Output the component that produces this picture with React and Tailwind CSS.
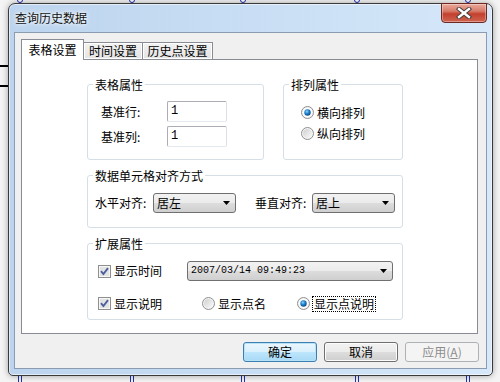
import React from "react";

const CJK = "font-['Noto_Sans_CJK_SC','Noto_Sans',sans-serif]";

function Radio({ checked }) {
  return (
    <svg width="13" height="13" viewBox="0 0 13 13" className="shrink-0">
      <defs>
        <linearGradient id="radOuter" x1="0" y1="0" x2="1" y2="1">
          <stop offset="0" stopColor="#cfcfcf" />
          <stop offset="1" stopColor="#fbfbfb" />
        </linearGradient>
        <radialGradient id="radDot" cx="0.4" cy="0.35" r="0.75">
          <stop offset="0" stopColor="#8fd6fb" />
          <stop offset="0.45" stopColor="#1c80cf" />
          <stop offset="1" stopColor="#0a3d70" />
        </radialGradient>
      </defs>
      <circle cx="6.5" cy="6.5" r="6" fill="#f4f4f4" stroke="#8e8f8f" />
      <circle cx="6.5" cy="6.5" r="4.5" fill={checked ? "#ffffff" : "url(#radOuter)"} />
      {checked && <circle cx="6.5" cy="6.5" r="3.2" fill="url(#radDot)" />}
    </svg>
  );
}

function Check() {
  return (
    <svg width="13" height="13" viewBox="0 0 13 13" className="shrink-0">
      <rect x="0.5" y="0.5" width="12" height="12" fill="#f6f6f6" stroke="#8e8f8f" />
      <rect x="2" y="2" width="9" height="9" fill="#e3e3e3" />
      <path d="M3 6.2 L5.4 9 L10 3.2" stroke="#4b5f9e" strokeWidth="1.9" fill="none" />
    </svg>
  );
}

function Arrow() {
  return (
    <svg width="7" height="4" viewBox="0 0 7 4" className="shrink-0">
      <polygon points="0,0 7,0 3.5,4" fill="#000" />
    </svg>
  );
}

function Group({ title, className, children }) {
  return (
    <div className={"relative border border-[#d5dfe5] rounded-[3px] bg-white " + className}>
      <span className="absolute left-[5px] top-[-8px] px-[2px] bg-white leading-[16px]">{title}</span>
      {children}
    </div>
  );
}

function Select({ text, className, mono }) {
  return (
    <div
      className={
        "flex items-center justify-between h-[20px] border border-[#707070] rounded-[3px] pl-[3px] pr-[5px] bg-[linear-gradient(#f2f2f2,#ebebeb_50%,#dddddd_50%,#cfcfcf)] " +
        className
      }
    >
      <span className={mono ? "font-['Liberation_Mono',monospace] text-[10px] leading-none" : "leading-none"}>{text}</span>
      <Arrow />
    </div>
  );
}

function TextBox({ value }) {
  return (
    <div className="w-[60px] h-[21px] border border-[#abadb3] border-r-[#dbdfe6] border-b-[#e3e9ef] rounded-[2px] bg-white pl-[3px] pt-[3px] font-['Liberation_Mono',monospace] text-[12px] leading-[12px]">
      {value}
    </div>
  );
}

export default function App() {
  const dots = [20, 132, 243, 357, 468];
  return (
    <div className={"relative w-[500px] h-[382px] overflow-hidden bg-[#f4f4f4] pt-[3px] pl-[8px] text-[12px] text-black " + CJK}>
      {/* desktop canvas decorations */}
      {dots.map((x) => (
        <div
          key={"d" + x}
          className="absolute top-[-3px] w-[6px] h-[6px] rounded-full border border-[#1f2fb8] bg-white"
          style={{ left: x - 3 }}
        />
      ))}
      {dots.map((x) => (
        <React.Fragment key={"b" + x}>
          <div className="absolute top-[375px] w-[1px] h-[7px] bg-[#1f2fb8]" style={{ left: x - 2 }} />
          <div className="absolute top-[375px] w-[1px] h-[7px] bg-[#1f2fb8]" style={{ left: x + 1 }} />
        </React.Fragment>
      ))}
      <div className="absolute left-0 top-[65px] w-[8px] h-[2px] bg-black" />
      <div className="absolute left-0 top-[85px] w-[8px] h-[2px] bg-black" />

      {/* window */}
      <div className="relative w-[485px] h-[373px] flex flex-col rounded-t-[7px] rounded-b-[5px] border border-[#3a3a3a] bg-[linear-gradient(90deg,#bcd4ee,#cbe0f5_60%,#d6e8fa)] shadow-[inset_0_0_0_1px_rgba(255,255,255,0.55),0_0_6px_rgba(0,0,0,0.35)]">
        {/* title bar */}
        <div className="relative h-[28px] shrink-0 flex items-center pl-[6px]">
          <span className="text-[12px] leading-none text-[#111] [text-shadow:0_0_6px_#fff,0_0_3px_#fff]">查询历史数据</span>
          <div className="absolute top-[-1px] right-[5px] w-[46px] h-[20px] flex items-center justify-center rounded-b-[4px] border border-[#6e2820] bg-[linear-gradient(#e8aa9b,#d77a68_40%,#c2402d_55%,#cf6450)] shadow-[inset_0_0_0_1px_rgba(255,255,255,0.35)]">
            <svg width="16" height="12" viewBox="0 0 16 12">
              <path d="M3 2 L13 10 M13 2 L3 10" stroke="#3b3b3b" strokeWidth="4.2" strokeLinecap="square" />
              <path d="M3 2 L13 10 M13 2 L3 10" stroke="#ffffff" strokeWidth="2.4" strokeLinecap="square" />
            </svg>
          </div>
        </div>

        {/* client area */}
        <div className="mx-[5px] mb-[6px] flex-1 flex flex-col border border-[#8b9bb0] bg-[#f0f0f0] pt-[6px] pl-[6px] pr-[7px]">
          {/* tabs */}
          <div className="relative z-10 flex items-end h-[20px]">
            <div className="w-[63px] h-[21px] -mb-[1px] flex items-center justify-center border border-b-0 border-[#898c95] bg-white leading-none">
              表格设置
            </div>
            <div className="w-[59px] h-[17px] flex items-center justify-center border border-b-0 border-l-0 border-[#898c95] bg-[linear-gradient(#f2f2f2,#e4e4e4)] shadow-[inset_0_0_0_1px_#fff] leading-none">
              时间设置
            </div>
            <div className="w-[70px] h-[17px] flex items-center justify-center border border-b-0 border-l-0 border-[#898c95] bg-[linear-gradient(#f2f2f2,#e4e4e4)] shadow-[inset_0_0_0_1px_#fff] leading-none">
              历史点设置
            </div>
          </div>

          {/* panel */}
          <div className="w-[457px] h-[275px] border border-[#898c95] bg-white pt-[24px] pl-[65px]">
            <div className="flex gap-[19px]">
              <Group title="表格属性" className="w-[177px] h-[76px] pt-[16px] pl-[13px] flex flex-col gap-[4px]">
                <div className="flex items-center">
                  <span className="w-[66px] leading-none">基准行:</span>
                  <TextBox value="1" />
                </div>
                <div className="flex items-center">
                  <span className="w-[66px] leading-none">基准列:</span>
                  <TextBox value="1" />
                </div>
              </Group>
              <Group title="排列属性" className="w-[120px] h-[76px] pt-[21px] pl-[17px] flex flex-col gap-[8px]">
                <div className="flex items-center h-[13px] gap-[3px]">
                  <Radio checked />
                  <span className="leading-none">横向排列</span>
                </div>
                <div className="flex items-center h-[13px] gap-[3px]">
                  <Radio />
                  <span className="leading-none">纵向排列</span>
                </div>
              </Group>
            </div>

            <Group title="数据单元格对齐方式" className="mt-[15px] w-[316px] h-[53px] pt-[17px] pl-[7px] flex items-start">
              <div className="flex items-center h-[20px]">
                <span className="w-[58px] leading-none">水平对齐:</span>
                <Select text="居左" className="w-[83px]" />
                <span className="ml-[19px] w-[57px] leading-none">垂直对齐:</span>
                <Select text="居上" className="w-[83px]" />
              </div>
            </Group>

            <Group title="扩展属性" className="mt-[15px] w-[316px] h-[77px] pt-[17px] pl-[10px] flex flex-col gap-[16px]">
              <div className="flex items-center h-[20px]">
                <div className="w-[89px] flex items-center gap-[3px]">
                  <Check />
                  <span className="leading-none">显示时间</span>
                </div>
                <Select text="2007/03/14 09:49:23" className="w-[206px]" mono />
              </div>
              <div className="flex items-center h-[13px]">
                <div className="w-[104px] flex items-center gap-[3px]">
                  <Check />
                  <span className="leading-none">显示说明</span>
                </div>
                <div className="w-[95px] flex items-center gap-[3px]">
                  <Radio />
                  <span className="leading-none">显示点名</span>
                </div>
                <div className="flex items-center gap-[2px]">
                  <Radio checked />
                  <span className="leading-none border border-dotted border-black px-[1px] py-[1px]">显示点说明</span>
                </div>
              </div>
            </Group>
          </div>

          {/* buttons */}
          <div className="mt-[8px] flex justify-end gap-[7px]">
            <button className="w-[74px] h-[20px] flex items-center justify-center rounded-[3px] border border-[#3c7fb1] bg-[linear-gradient(#eaf6fd,#d9f0fc_50%,#bee6fd_50%,#a7d9f5)] shadow-[inset_0_0_0_1px_#b6e2f8] leading-none">
              确定
            </button>
            <button className="w-[74px] h-[20px] flex items-center justify-center rounded-[3px] border border-[#707070] bg-[linear-gradient(#f2f2f2,#ebebeb_50%,#dddddd_50%,#cfcfcf)] shadow-[inset_0_0_0_1px_#fcfcfc] leading-none">
              取消
            </button>
            <button className="w-[74px] h-[20px] flex items-center justify-center rounded-[3px] border border-[#adb2b5] bg-[#f4f4f4] text-[#8c8c8c] leading-none">
              应用(<span className="underline">A</span>)
            </button>
          </div>
        </div>
      </div>
    </div>
  );
}
